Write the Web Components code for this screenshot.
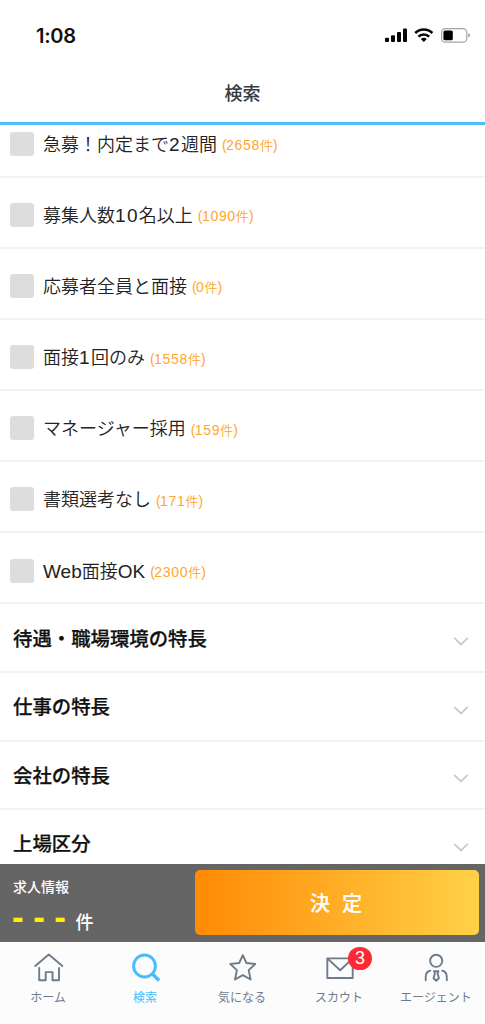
<!DOCTYPE html>
<html lang="ja">
<head>
<meta charset="utf-8">
<meta name="viewport" content="width=device-width">
<title>検索</title>
<style>
html,body{margin:0;height:100%;background:#fff}
body{font-family:"Noto Sans CJK JP",sans-serif;color:#222;overflow:hidden}
</style>
</head>
<body>
<search-screen></search-screen>
<script>
function define(name, html, setup) {
  const template = document.createElement('template');
  template.innerHTML = html;
  customElements.define(name, class extends HTMLElement {
    connectedCallback() {
      if (this.shadowRoot) return;
      this.attachShadow({mode: 'open'}).append(template.content.cloneNode(true));
      if (setup) setup(this, this.shadowRoot);
    }
  });
}

define('status-bar', `
<style>
:host{display:flex;height:70px;box-sizing:border-box;padding:0 14px 0 36px;justify-content:space-between;align-items:center;color:#111;font:600 20px/70px Inter,sans-serif}
.icons{display:block;width:86px;height:18px}
.time{letter-spacing:-.25px;margin-top:1px}
</style>
<span class="time">1:08</span>
<svg class="icons" viewBox="385 26 86 18">
  <g fill="#050505"><rect x="385" y="37.7" width="4" height="4.4" rx="1"/><rect x="391" y="35.3" width="4" height="6.8" rx="1"/><rect x="397" y="32" width="4" height="10.1" rx="1"/><rect x="403" y="28.4" width="4" height="13.7" rx="1"/></g>
  <g fill="none" stroke="#050505" stroke-width="2.5"><path d="M415.2 33a12.3 12.3 0 0 1 17.2 0"/><path d="M418.4 36.6a7.8 7.8 0 0 1 10.8 0"/></g>
  <path d="M420.8 39.1a4.4 4.4 0 0 1 6 0l-3 3z" fill="#050505"/>
  <rect x="441.6" y="28.6" width="25.2" height="13.6" rx="3.7" fill="none" stroke="#a5a5a5" stroke-width="1.2"/>
  <rect x="443.4" y="30.5" width="9.4" height="9.8" rx="1.6" fill="#000"/>
  <path d="M468.4 33.3q1.5.7 1.5 2t-1.5 2z" fill="#888"/>
</svg>`);

define('page-header', `
<style>
:host{display:block;box-sizing:border-box;height:55px;border-bottom:3px solid #4dbdfb;text-align:center;color:#333d42;font-weight:500;font-size:18px;line-height:45px;background:#fff;-webkit-text-stroke:.1px}
</style><slot></slot>`);

define('check-row', `
<style>
:host{display:flex;box-sizing:border-box;height:71.15px;flex:none;border-bottom:2px solid #f3f3f3;padding:25.3px 10px 0;align-items:flex-start}
.box{width:24px;height:24px;border-radius:3px;background:#ddd;flex:none}
.label{margin-left:9px;margin-top:-1px;font-size:18px;line-height:24px;font-weight:350;color:#222;white-space:nowrap}
::slotted(i){font:normal 19px/1 "Liberation Sans",sans-serif}
::slotted(i.num){letter-spacing:1.35px}
.count{margin-left:5px;font-size:13px;line-height:24px;margin-top:1.5px;color:#ffa62b;white-space:nowrap;font-weight:350}
.count i{font:normal 14px/1 "Liberation Sans",sans-serif;letter-spacing:.7px}
.count i.paren{letter-spacing:-.6px}
</style>
<span class="box"></span><span class="label"><slot></slot></span><span class="count"><i class="paren">(</i><i class="value"></i>件<i class="paren">)</i></span>`,
(host, root) => {
  root.querySelector('.value').textContent = host.getAttribute('count');
});

define('section-row', `
<style>
:host{display:flex;box-sizing:border-box;height:68.6px;flex:none;border-bottom:2px solid #f3f3f3;padding:0 16px 0 13px;justify-content:space-between;align-items:center;font-weight:500;font-size:19.4px;line-height:30px;color:#111;-webkit-text-stroke:.25px}
svg{width:16px;height:9px;margin-top:8px}
</style>
<span><slot></slot></span>
<svg viewBox="0 0 16 9"><path d="M1.2 .9 8 7.5 14.8 .9" fill="none" stroke="#c9c9c9" stroke-width="1.8"/></svg>`);

define('result-bar', `
<style>
:host{display:flex;box-sizing:border-box;height:78px;background:#656565;padding:6px 6px 7px 13px;justify-content:space-between;color:#fff}
.info{display:flex;flex-direction:column}
.title{font-weight:500;font-size:14px;line-height:20px;margin-top:6px}
.total{display:flex;align-items:center;height:36px;margin-top:7px}
.dash{font:bold 35px/36px "Liberation Sans",sans-serif;color:#fff000;letter-spacing:-.1px;margin:-4px 0 0 -1px;white-space:pre}
.unit{font-weight:500;font-size:18px;line-height:24px;margin-top:3px}
button{width:284px;height:65px;border:0;border-radius:5px;background:linear-gradient(90deg,#ff8a05,#ffd147);color:#fff;font:500 20px/65px "Noto Sans CJK JP",sans-serif;padding:0 2px 0 0;word-spacing:7.5px;-webkit-text-stroke:.2px}
</style>
<div class="info"><span class="title">求人情報</span><div class="total"><span class="dash">- - - </span><span class="unit">件</span></div></div>
<button>決 定</button>`);

define('tab-item', `
<style>
:host{display:flex;flex-direction:column;align-items:center;flex:1;color:#6d7b8c;font-size:12px;line-height:18px;font-weight:400;padding-top:9px}
:host([active]){color:#49bdfb}
.icon{position:relative;width:34px;height:34px}
::slotted(svg){display:block;width:34px;height:34px;overflow:visible}
.label{margin:2.5px 1px 0 0;white-space:nowrap}
.badge{position:absolute;left:25.8px;top:-4px;width:23.4px;height:23.4px;border-radius:50%;background:#fd2934;color:#fff;font:18px/23.4px "Liberation Sans",sans-serif;text-align:center}
</style>
<div class="icon"><slot name="icon"></slot></div><span class="label"><slot></slot></span>`,
(host, root) => {
  if (host.hasAttribute('badge')) {
    const badge = document.createElement('span');
    badge.className = 'badge';
    badge.textContent = host.getAttribute('badge');
    root.querySelector('.icon').append(badge);
  }
});

define('tab-bar', `
<style>
:host{display:flex;height:82px;background:#fcfcfc}
</style><slot></slot>`);

define('search-screen', `
<style>
:host{display:flex;flex-direction:column;height:1024px;width:100%;background:#fff;overflow:hidden}
main{flex:1;min-height:0;overflow:hidden;display:flex;flex-direction:column}
check-row:first-child{height:52.5px;padding-top:6.7px}
</style>
<status-bar></status-bar>
<page-header>検索</page-header>
<main>
  <check-row count="2658">急募！内定まで<i class="num">2</i>週間</check-row>
  <check-row count="1090">募集人数<i class="num">10</i>名以上</check-row>
  <check-row count="0">応募者全員と面接</check-row>
  <check-row count="1558">面接<i class="num">1</i>回のみ</check-row>
  <check-row count="159">マネージャー採用</check-row>
  <check-row count="171">書類選考なし</check-row>
  <check-row count="2300"><i>Web</i>面接<i>OK</i></check-row>
  <section-row>待遇・職場環境の特長</section-row>
  <section-row>仕事の特長</section-row>
  <section-row>会社の特長</section-row>
  <section-row>上場区分</section-row>
</main>
<result-bar></result-bar>
<tab-bar>
  <tab-item>ホーム<svg slot="icon" viewBox="0 0 34 34" fill="none" stroke="#6d7b8c" stroke-width="1.9" stroke-linejoin="round" stroke-linecap="round"><path d="M3.2 15 16.8 3.6 30.4 15M7.2 17v12.3h6.5v-8.2h6.8v8.2H27V17"/></svg></tab-item>
  <tab-item active>検索<svg slot="icon" viewBox="0 0 34 34" fill="none" stroke="#49bdfb" stroke-width="3"><circle cx="15.5" cy="15" r="10.9"/><path d="m23 22.5 7.1 7" stroke-width="3.4"/></svg></tab-item>
  <tab-item>気になる<svg slot="icon" viewBox="0 0 34 34" fill="none" stroke="#6d7b8c" stroke-width="1.9" stroke-linejoin="round"><path d="M16.8 4.2 20.4 12l8.9 1-6.6 6.1 1.9 9.4-7.8-4.4L9 28.5l1.9-9.4L4.3 13l8.9-1z"/></svg></tab-item>
  <tab-item badge="3">スカウト<svg slot="icon" viewBox="0 0 34 34" fill="none" stroke="#6d7b8c" stroke-width="1.9" stroke-linejoin="round"><path d="M4.3 7.4h25.4V27H4.3zM4.3 7.4 17.2 19.2 29.7 7.4"/></svg></tab-item>
  <tab-item>エージェント<svg slot="icon" viewBox="0 0 34 34" fill="none" stroke="#6d7b8c" stroke-width="1.9" stroke-linecap="round" stroke-linejoin="round"><circle cx="16.2" cy="9.8" r="6.1"/><path d="M5.7 29.2v-3c0-3.8 1.4-6 4.6-6.5M26.8 29.2v-3c0-3.8-1.4-6-4.6-6.5M14 20.2h4.5l-.9 2.2 1.3 4.9-2.7 2.4-2.7-2.4 1.4-4.9z"/></svg></tab-item>
</tab-bar>`);
</script>
</body>
</html>
